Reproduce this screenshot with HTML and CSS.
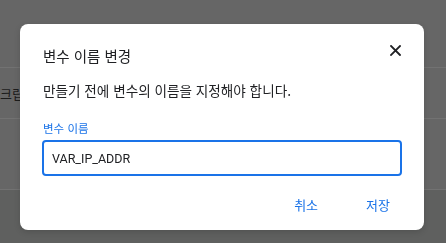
FILE: index.html
```html
<!DOCTYPE html>
<html lang="ko">

<head>
    <meta charset="UTF-8">
    <meta name="viewport" content="width=device-width, initial-scale=1.0">
    <title>변수 이름 변경</title>
    <link rel="stylesheet" href="styles.css">
</head>

<body>
    <div class="page">
        <div class="row row-head"></div>
        <div class="row"><span class="cell">크립트</span></div>
        <div class="row row-tall"></div>
        <div class="row-foot"></div>
    </div>

    <div class="overlay">
        <div class="dialog">
            <div class="dialog-head">
                <h2 class="dialog-title">변수 이름 변경</h2>
                <button class="close-btn" aria-label="닫기">
                    <svg width="11" height="11" viewBox="0 0 11 11">
                        <path d="M1 1 L10 10 M10 1 L1 10" stroke="#202124" stroke-width="1.8" fill="none" stroke-linecap="square" />
                    </svg>
                </button>
            </div>
            <p class="dialog-text">만들기 전에 변수의 이름을 지정해야 합니다.</p>
            <label class="field-label" for="var-name">변수 이름</label>
            <input class="field-input" id="var-name" type="text" value="VAR_IP_ADDR">
            <div class="dialog-actions">
                <button class="text-btn">취소</button>
                <button class="text-btn">저장</button>
            </div>
        </div>
    </div>
</body>

</html>
```

FILE: styles.css
```css
* {
    padding: 0;
    margin: 0;
    box-sizing: border-box;
}

body {
    width: 446px;
    height: 243px;
    overflow: hidden;
    background-color: #666666;
    font-family: "Noto Sans CJK KR", "Noto Sans", sans-serif;
}

/* 뒤쪽 페이지 */
.page {
    display: flex;
    flex-direction: column;
    height: 243px;
}

.row {
    height: 51px;
    border-bottom: 1px solid #727272;
    display: flex;
    align-items: center;
}

.row-head {
    height: 68px;
}

.row-tall {
    height: 71px;
}

.row-foot {
    flex: 1;
    background-color: #5f605f;
}

.cell {
    font-size: 13px;
    color: #1c1c1c;
}

/* 다이얼로그 */
.overlay {
    position: fixed;
    top: 0;
    left: 0;
    right: 0;
    bottom: 0;
    display: flex;
    justify-content: center;
    align-items: flex-start;
    padding-top: 24px;
    padding-right: 2px;
}

.dialog {
    width: 404px;
    height: 206px;
    background-color: #fff;
    border-radius: 8px;
    padding: 0 22px 0 23px;
    display: flex;
    flex-direction: column;
    box-shadow: 0 2px 6px rgba(0, 0, 0, 0.15);
}

.dialog-head {
    display: flex;
    justify-content: space-between;
    align-items: flex-start;
    padding-top: 22px;
}

.dialog-title {
    font-size: 14.5px;
    font-weight: normal;
    line-height: 20px;
    color: #202124;
}

.close-btn {
    border: none;
    background: none;
    width: 11px;
    height: 11px;
    margin-top: -1px;
    margin-right: 1px;
    display: flex;
    cursor: pointer;
}

.dialog-text {
    margin-top: 14px;
    font-size: 13.6px;
    line-height: 20px;
    color: #202124;
}

.field-label {
    margin-top: 20px;
    font-size: 11.5px;
    line-height: 16px;
    color: #1a73e8;
}

.field-input {
    margin-top: 4px;
    margin-left: -1px;
    width: 360px;
    height: 36px;
    border: 2px solid #1a73e8;
    border-radius: 4px;
    padding: 0 8px;
    font-family: Roboto, "Noto Sans", sans-serif;
    font-size: 12.5px;
    color: #202124;
    outline: none;
}

.dialog-actions {
    display: flex;
    justify-content: flex-end;
    gap: 24px;
    margin-top: 10px;
}

.text-btn {
    border: none;
    background: none;
    height: 36px;
    padding: 0 12px;
    font-family: "Noto Sans CJK KR", sans-serif;
    font-size: 13px;
    color: #1a73e8;
    cursor: pointer;
}
```
